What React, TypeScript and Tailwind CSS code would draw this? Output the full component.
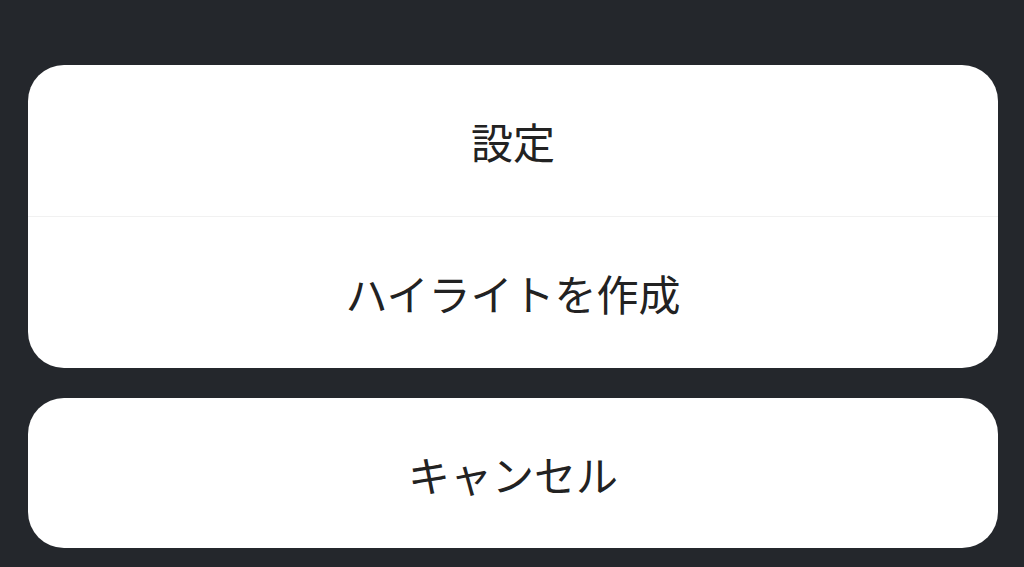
export default function App() {
  const font = { fontFamily: '"Noto Sans CJK JP", "Noto Sans", sans-serif' };
  return (
    <div
      className="w-[1024px] h-[567px] bg-[#24272c] flex flex-col pt-[65px] pl-[28px] pr-[26px] gap-[30px] overflow-hidden"
      style={font}
    >
      {/* Action group */}
      <div className="bg-white rounded-[36px] flex flex-col overflow-hidden">
        <button className="h-[152px] flex items-center justify-center text-[42px] text-[#222222] border-b border-[#f1f1f1]">
          設定
        </button>
        <button className="h-[151px] flex items-center justify-center text-[42px] text-[#222222]">
          ハイライトを作成
        </button>
      </div>

      {/* Cancel */}
      <button className="bg-white rounded-[36px] h-[150px] flex items-center justify-center text-[42px] text-[#222222]">
        キャンセル
      </button>
    </div>
  );
}
